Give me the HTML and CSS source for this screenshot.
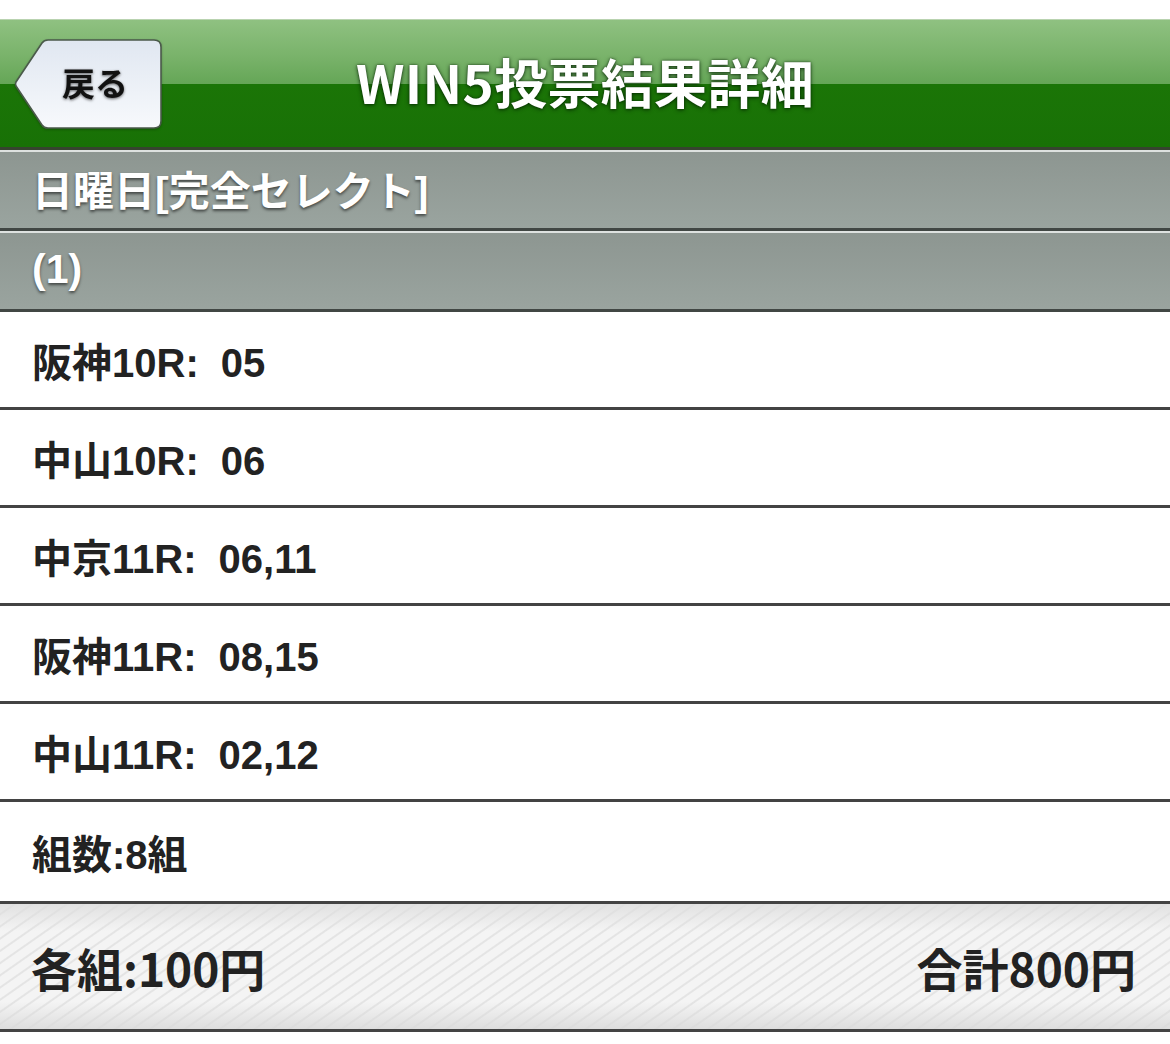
FILE: index.html
```html
<!DOCTYPE html>
<html lang="ja">
<head>
<meta charset="utf-8">
<title>WIN5投票結果詳細</title>
<link rel="stylesheet" href="styles.css">
</head>
<body>
<div class="page">
  <div class="top-gap"></div>
  <header class="navbar">
    <div class="nav-left">
      <a class="back-btn" href="#">
        <svg class="back-shape" width="150" height="92" viewBox="0 0 150 92" aria-hidden="true">
          <defs>
            <linearGradient id="bg" x1="0" y1="0" x2="0" y2="1">
              <stop offset="0" stop-color="#e0e7f1"/>
              <stop offset="1" stop-color="#f7f9fc"/>
            </linearGradient>
          </defs>
          <path d="M34 2 H140 Q147 2 147 9 V83 Q147 90 140 90 H34 Q30 90 28 87 L2 48 Q1 46 2 44 L28 5 Q30 2 34 2 Z" fill="url(#bg)" stroke="#4b5a4b" stroke-width="1.6"/>
        </svg>
        <span class="back-label">戻る</span>
      </a>
    </div>
    <h1 class="title">WIN5投票結果詳細</h1>
    <div class="nav-right"></div>
  </header>
  <section class="band"><span class="band-text">日曜日[完全セレクト]</span></section>
  <section class="band"><span class="band-text">(1)</span></section>
  <ul class="rows">
    <li class="row">阪神10R: 05</li>
    <li class="row">中山10R: 06</li>
    <li class="row">中京11R: 06,11</li>
    <li class="row">阪神11R: 08,15</li>
    <li class="row">中山11R: 02,12</li>
    <li class="row row-last">組数:8組</li>
  </ul>
  <footer class="summary">
    <span class="sum-text">各組:100円</span>
    <span class="sum-text">合計800円</span>
  </footer>
</div>
</body>
</html>
```

FILE: styles.css
```css
* { box-sizing: border-box; }
html, body { margin: 0; padding: 0; background: #ffffff; }
body {
  font-family: "Liberation Sans", "Noto Sans CJK JP", sans-serif;
  font-weight: bold;
  color: #222;
}
.page { width: 1170px; }

.top-gap { height: 19px; background: #fff; }

.navbar {
  height: 131px;
  border-top: 1px solid #b9d3b0;
  border-bottom: 3px solid #36432f;
  background:
    linear-gradient(to bottom, #8fc181 0%, #78b269 30%, #65a657 50%, #1b7507 50.1%, #187106 100%);
  display: grid;
  grid-template-columns: 1fr auto 1fr;
  align-items: center;
}
.nav-left { display: flex; align-items: center; padding-left: 14px; }
.back-btn {
  display: grid;
  width: 150px;
  height: 92px;
  text-decoration: none;
  color: #111;
  filter: drop-shadow(0 1px 1px rgba(0,0,0,0.25));
}
.back-shape, .back-label { grid-area: 1 / 1; }
.back-label {
  align-self: center;
  justify-self: center;
  margin-left: 12px;
  margin-top: -4px;
  font-family: "Noto Sans CJK JP", sans-serif;
  font-size: 33px;
  font-weight: 700;
  color: #111;
  text-shadow: 0 1px 3px rgba(0,0,0,0.6);
}
.title {
  margin: 0;
  margin-top: -6px;
  font-family: "Noto Sans CJK JP", sans-serif;
  font-size: 53px;
  font-weight: 700;
  color: #fff;
  letter-spacing: 0.3px;
  text-shadow: 0 1px 4px rgba(0,30,0,0.75), 0 0 2px rgba(0,30,0,0.6);
}

.band {
  height: 81px;
  border-top: 2px solid #dde1df;
  border-bottom: 3px solid #414744;
  background: linear-gradient(to bottom, #8d9691 0%, #9aa49f 100%);
  display: flex;
  align-items: center;
  padding-left: 32px;
}
.band-text {
  font-family: "Liberation Sans", "Noto Sans CJK JP", sans-serif;
  font-size: 41px;
  font-weight: 700;
  color: #fff;
  margin-top: -4px;
  text-shadow: 0 2px 3px rgba(0,0,0,0.55);
}

.rows { list-style: none; margin: 0; padding: 0; }
.row {
  height: 98px;
  border-bottom: 3px solid #434343;
  display: flex;
  align-items: center;
  padding-left: 32px;
  font-size: 40px;
  word-spacing: 11px;
  color: #222;
  background: #fff;
}
.row-last { height: 102px; }

.summary {
  height: 128px;
  border-bottom: 3px solid #444;
  display: flex;
  justify-content: space-between;
  align-items: center;
  padding: 0 34px 0 31px;
  background:
    linear-gradient(to bottom, rgba(222,222,222,0.85) 0%, rgba(255,255,255,0) 22%, rgba(255,255,255,0) 78%, rgba(218,218,218,0.85) 100%),
    repeating-linear-gradient(145deg, #f4f4f4 0px, #f4f4f4 7px, #e4e4e4 8px, #e4e4e4 9px, #f4f4f4 10px);
}
.sum-text {
  font-family: "Noto Sans CJK JP", sans-serif;
  font-size: 46px;
  font-weight: 700;
  color: #222;
}
```
